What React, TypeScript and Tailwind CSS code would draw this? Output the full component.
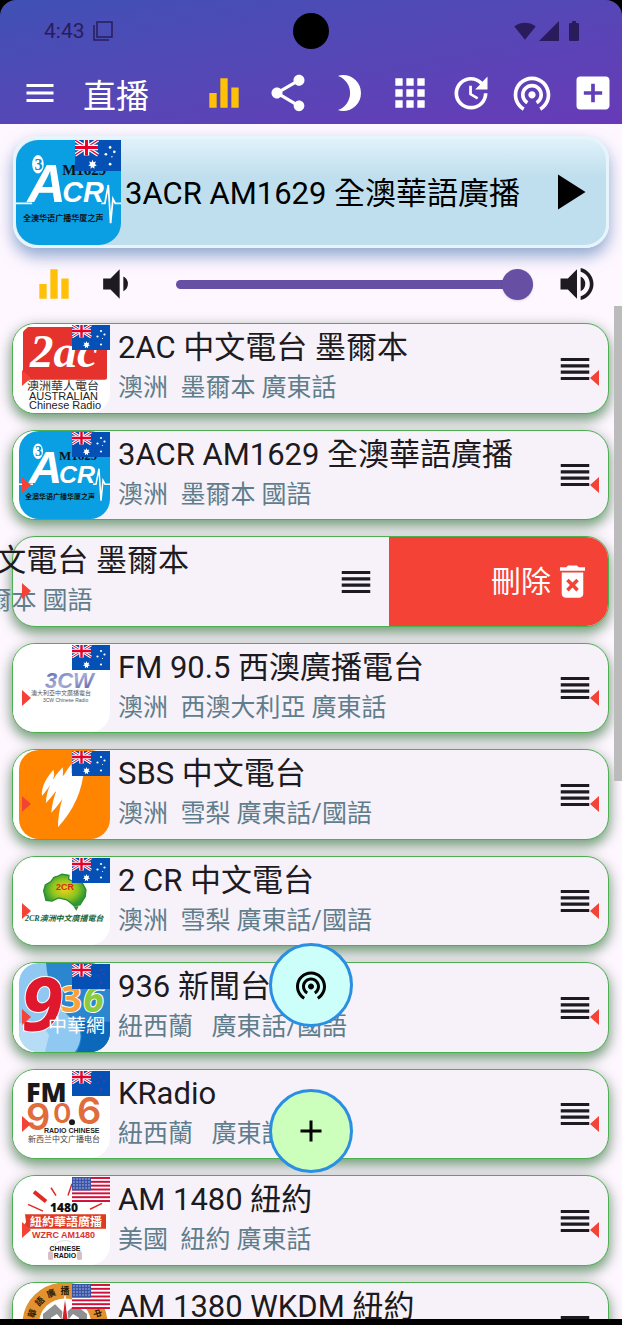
import React from 'react';
import {
  MdAdd,
  MdAddBox,
  MdApps,
  MdBatteryFull,
  MdDeleteForever,
  MdEqualizer,
  MdMenu,
  MdPlayArrow,
  MdReorder,
  MdShare,
  MdSignalCellular4Bar,
  MdSignalWifi4Bar,
  MdUpdate,
  MdVolumeDown,
  MdVolumeUp,
  MdWifiTethering,
} from 'react-icons/md';

type Country = 'au' | 'nz' | 'us';

type Station = {
  name: string;
  detail: string;
  country: Country;
  logo: React.ReactNode;
  swiped?: boolean;
};

const cjk = "font-['Noto_Sans_CJK_TC',sans-serif]";
const arial = "font-['Liberation_Sans',sans-serif]";
const times = "font-['Liberation_Serif',serif]";

const UnionJack = () => (
  <g>
    <path d="M0 0 19 12M19 0 0 12" stroke="#fff" strokeWidth="3" />
    <path d="M0 0 19 12M19 0 0 12" stroke="#e4002b" strokeWidth="1" />
    <path d="M9.500 0V12.500M0 6H19" stroke="#fff" strokeWidth="4.500" />
    <path d="M9.500 0V12.500M0 6H19" stroke="#e4002b" strokeWidth="2.400" />
  </g>
);

const Flag = ({ country, className }: { country: Country; className: string }) => (
  <svg viewBox="0 0 38 25" preserveAspectRatio="none" className={className} aria-hidden="true">
    {country === 'us' ? (
      <g>
        <rect width="38" height="25" fill="#fff" />
        {[0, 1, 2, 3, 4, 5, 6].map((n) => (
          <rect key={n} y={n * 3.84} width="38" height="1.95" fill="#d0103a" />
        ))}
        <rect width="19" height="13.500" fill="#3a55a8" />
        {[2, 5, 8, 11].map((y) =>
          [2, 5, 8, 11, 14, 17].map((x) => <circle key={`${x}-${y}`} cx={x} cy={y} r="0.7" fill="#cdd6f0" />)
        )}
      </g>
    ) : (
      <g>
        <rect width="38" height="25" fill="#0450b4" />
        <UnionJack />
        {country === 'au' ? (
          <g fill="#fff">
            <path d="m14.500 16 .8 2 2.100-.6-1 1.900 1.600 1.300-2 .5.1 2.100-1.600-1.300-1.600 1.300.1-2.100-2-.5 1.600-1.300-1-1.900 2.100.6z" />
            <circle cx="29" cy="6" r="1.100" />
            <circle cx="25.500" cy="11.500" r="1.100" />
            <circle cx="32.500" cy="9.500" r="1.100" />
            <circle cx="30.500" cy="13.500" r="0.6" />
            <circle cx="29" cy="19.500" r="1.100" />
          </g>
        ) : (
          <g fill="#5b3a98">
            <circle cx="29" cy="6" r="1" />
            <circle cx="26" cy="11.500" r="1" />
            <circle cx="32" cy="10" r="1" />
            <circle cx="29" cy="18.500" r="1.200" />
          </g>
        )}
      </g>
    )}
  </svg>
);

const Logo2ac = () => (
  <>
    <rect width="91" height="91" fill="#fff" />
    <rect x="4" y="3" width="84" height="54" rx="2" fill="#e5322d" />
    <text x="11" y="44" fontSize="47" fill="#fff" className={`${times} font-bold italic`}>2ac</text>
    <text x="8" y="67" fontSize="12" fill="#333" className={cjk}>澳洲華人電台</text>
    <text x="10" y="78" fontSize="11" fill="#222" className={arial}>AUSTRALIAN</text>
    <text x="10" y="87" fontSize="11" fill="#222" className={arial}>Chinese Radio</text>
  </>
);

const Logo3acr = () => (
  <>
    <rect width="91" height="91" fill="#0a9fe3" />
    <ellipse cx="19" cy="21" rx="5" ry="8" fill="#fff" />
    <text x="16" y="26" fontSize="14" fill="#0a8fd0" className={`${times} font-bold`}>3</text>
    <text x="40" y="30" fontSize="13" fill="#111" className={`${times} font-bold`}>M1629</text>
    <text x="10" y="54" fontSize="46" fill="#fff" className={`${arial} font-bold italic`}>A</text>
    <text x="40" y="54" fontSize="25" fill="#fff" className={`${arial} font-bold italic`}>CR</text>
    <path d="M0 55H14M74 55H77L80 39 82 72 84 51 86 55H91" fill="none" stroke="#fff" strokeWidth="1.500" />
    <text x="6" y="70" fontSize="7" fill="#111" className="font-['Noto_Sans_CJK_SC',sans-serif] font-bold">全澳华语广播华厦之声</text>
  </>
);

const Logo3cw = () => (
  <>
    <defs>
      <linearGradient id="cw" x1="0" y1="0" x2="1" y2="1">
        <stop offset="0" stopColor="#4858a8" />
        <stop offset="0.5" stopColor="#a9b1da" />
        <stop offset="1" stopColor="#4b4f9a" />
      </linearGradient>
    </defs>
    <rect width="91" height="91" fill="#fff" />
    <text x="26" y="45" fontSize="22" fill="url(#cw)" className={`${arial} font-bold italic`}>3CW</text>
    <text x="12" y="53" fontSize="6" fill="#555" className={cjk}>澳大利亞中文廣播電台</text>
    <text x="24" y="60" fontSize="5" fill="#555" className={arial}>3CW Chinese Radio</text>
  </>
);

const LogoSbs = () => (
  <>
    <rect width="91" height="91" fill="#ff8400" />
    <g transform="scale(.333) translate(-57 -33)" fill="#fff">
      <path d="M126 174Q122 140 160 94Q172 120 126 174Z" />
      <path d="M138 196Q138 140 188 86Q198 130 138 196Z" />
      <path d="M154 226Q160 150 214 76Q224 150 154 226Z" />
      <path d="M174 270Q174 190 226 78L252 90Q246 190 174 270Z" />
      <path d="M140 128 200 108 210 170 160 160Z" />
    </g>
  </>
);

const Logo2cr = () => (
  <>
    <defs>
      <radialGradient id="oz">
        <stop offset="0" stopColor="#f2d21c" />
        <stop offset="0.6" stopColor="#8cc420" />
        <stop offset="1" stopColor="#2f9a34" />
      </radialGradient>
    </defs>
    <rect width="91" height="91" fill="#fff" />
    <g transform="scale(.333) translate(-57 -351)" fill="url(#oz)" stroke="#2c8a2f" strokeWidth="4">
      <path d="M131 456 136 438 152 428 162 414 174 410 186 404 207 408 206 420 222 428 232 424 238 400 246 430 258 452 256 474 240 500 222 502 208 490 200 484 176 478 156 488 138 486Z" />
      <path d="M224 506h9l-4 8z" />
    </g>
    <text x="37" y="34" fontSize="9" fill="#d22a12" className={`${arial} font-bold`}>2CR</text>
    <text x="6" y="66" fontSize="8" fill="#14623a" className="font-['Liberation_Serif','Noto_Sans_CJK_TC',serif] font-bold italic">2CR澳洲中文廣播電台</text>
  </>
);

const Logo936 = () => (
  <>
    <rect width="91" height="91" fill="#8fc8f0" />
    <path d="M27 0H91V91H56Q66 76 58 62Q30 40 27 0Z" fill="#2a86cf" />
    <path d="M0 62Q20 54 30 74L26 91H0Z" fill="#b6dcf6" />
    <path d="M60 60H91V91H58Q66 76 60 60Z" fill="#0c68ba" />
    <text x="2" y="70" fontSize="76" fill="#e0182d" stroke="#fff" strokeWidth="2" paintOrder="stroke" className="font-['Open_Sans',sans-serif] font-bold italic">9</text>
    <text x="42" y="50" fontSize="36" fill="#f9a13a" stroke="#fff" strokeWidth="2" paintOrder="stroke" className="font-['Open_Sans',sans-serif] font-bold">3</text>
    <text x="64" y="50" fontSize="38" fill="#8ccc3c" stroke="#fff" strokeWidth="2" paintOrder="stroke" className="font-['Open_Sans',sans-serif] font-bold italic">6</text>
    <text x="29" y="71" fontSize="19" fill="#fff" className={cjk}>中華網</text>
  </>
);

const Logo906 = () => (
  <>
    <rect width="91" height="91" fill="#fff" />
    <text x="7" y="33" fontSize="27" fill="#1a1a1a" className="font-['Open_Sans',sans-serif] font-extrabold">FM</text>
    <g fill="#e06c3c" className="font-['Inter',sans-serif] font-semibold">
      <text x="7" y="62" fontSize="38">9</text>
      <text x="34" y="55" fontSize="28">0</text>
      <text x="58" y="56" fontSize="38">6</text>
    </g>
    <circle cx="53" cy="54" r="3" fill="#1a1a1a" />
    <text x="25" y="65" fontSize="7" fill="#222" className={`${arial} font-bold`}>RADIO CHINESE</text>
    <text x="9" y="74" fontSize="8" fill="#444" className="font-['Noto_Sans_CJK_SC',sans-serif]">新西兰中文广播电台</text>
  </>
);

const Logo1480 = () => (
  <>
    <rect width="91" height="91" fill="#fff" />
    <g stroke="#e12a20" strokeWidth="1.500">
      <path d="M15 16 27 26" strokeWidth="4" />
      <path d="M32 12 37 20M53 8 49 20M9 29 24 36M71 34 83 28" />
    </g>
    <text x="31" y="37" fontSize="12" fill="#111" className="font-['Open_Sans',sans-serif] font-extrabold">1480</text>
    <path d="M6 39H87V54H3L7 47Z" fill="#e03a22" />
    <text x="11" y="51" fontSize="12" fill="#fff" className={`${cjk} font-bold`}>紐約華語廣播</text>
    <text x="13" y="63" fontSize="9" fill="#dc3232" className={`${arial} font-bold`}>WZRC AM1480</text>
    <path d="M33 75Q36 66 46 66T59 75" fill="none" stroke="#ddd" />
    <rect x="29" y="77" width="5" height="9" rx="2" fill="#d9bfc4" />
    <rect x="58" y="77" width="5" height="9" rx="2" fill="#d9bfc4" />
    <text x="46" y="77" fontSize="7" fill="#111" textAnchor="middle" className={`${arial} font-bold`}>CHINESE</text>
    <text x="46" y="84" fontSize="7" fill="#111" textAnchor="middle" className={`${arial} font-bold`}>RADIO</text>
  </>
);

const Logo1380 = () => (
  <>
    <rect width="91" height="91" fill="#fff" />
    <circle cx="46" cy="42" r="34" fill="none" stroke="#e2922f" strokeWidth="17" />
    <circle cx="46" cy="42" r="26" fill="#fff" />
    <path d="M24 46V32L36 22 46 32 56 22 68 32V46H60V36L54 32 46 42 38 32 32 36V46Z" fill="#8f9092" />
    <path d="M46 13 50 46H42Z" fill="#d5202b" stroke="#fff" />
    <g fontSize="9" fill="#2a1a08" textAnchor="middle" className={`${cjk} font-bold`}>
      {['華', '語', '廣', '播', '電', '台', '中'].map((char, index) => (
        <text key={char} x="46" y="11" transform={`rotate(${index * 24 - 72} 46 42)`}>{char}</text>
      ))}
    </g>
  </>
);

const stations: Station[] = [
  { name: '2AC 中文電台 墨爾本', detail: '澳洲  墨爾本 廣東話', country: 'au', logo: <Logo2ac /> },
  { name: '3ACR AM1629 全澳華語廣播', detail: '澳洲  墨爾本 國語', country: 'au', logo: <Logo3acr /> },
  { name: '2AC 中文電台 墨爾本', detail: '澳洲  墨爾本 國語', country: 'au', logo: <Logo2ac />, swiped: true },
  { name: 'FM 90.5 西澳廣播電台', detail: '澳洲  西澳大利亞 廣東話', country: 'au', logo: <Logo3cw /> },
  { name: 'SBS 中文電台', detail: '澳洲  雪梨 廣東話/國語', country: 'au', logo: <LogoSbs /> },
  { name: '2 CR 中文電台', detail: '澳洲  雪梨 廣東話/國語', country: 'au', logo: <Logo2cr /> },
  { name: '936 新聞台', detail: '紐西蘭   廣東話/國語', country: 'nz', logo: <Logo936 /> },
  { name: 'KRadio', detail: '紐西蘭   廣東話', country: 'nz', logo: <Logo906 /> },
  { name: 'AM 1480 紐約', detail: '美國  紐約 廣東話', country: 'us', logo: <Logo1480 /> },
  { name: 'AM 1380 WKDM 紐約', detail: '美國  紐約 國語', country: 'us', logo: <Logo1380 /> },
];

const StatusBar = () => (
  <div className="relative flex h-[62px] items-center justify-between pl-11 pr-9 text-[#2a1c5c]">
    <div className="flex items-center gap-2">
      <span className="text-[21px] leading-6">4:43</span>
      <svg width="20" height="20" viewBox="0 0 20 20" fill="none" stroke="currentColor" strokeWidth="1.500" aria-hidden="true">
        <path d="M4 1H19V16H4ZM1 4V19H16" />
      </svg>
    </div>
    <div className="flex items-center gap-px">
      <MdSignalWifi4Bar size={22} />
      <MdSignalCellular4Bar size={24} />
      <MdBatteryFull size={24} />
    </div>
    <div className="absolute left-1/2 top-1/2 size-9 -translate-x-1/2 -translate-y-1/2 rounded-full bg-black" />
  </div>
);

const Toolbar = () => (
  <div className="flex h-[62px] items-center pl-[22px] pr-[7px] text-white">
    <button aria-label="選單"><MdMenu size={36} /></button>
    <h1 className="ml-[25px] flex-1 pt-2 text-[33px] leading-10">直播</h1>
    <div className="flex items-center gap-[17px]">
      <button aria-label="均衡器" className="mr-[3px] text-[#ffc107]"><MdEqualizer size={44} /></button>
      <button aria-label="分享"><MdShare size={44} /></button>
      <button aria-label="夜間模式">
        <svg width="44" height="44" viewBox="0 0 44 44" fill="currentColor" aria-hidden="true">
          <path d="M11 5Q13 4 16 4A18 18 0 0 1 16 40Q13 40 11 39A18 18 0 0 0 11 5Z" />
        </svg>
      </button>
      <button aria-label="分類"><MdApps size={44} /></button>
      <button aria-label="定時"><MdUpdate size={44} /></button>
      <button aria-label="廣播"><MdWifiTethering size={44} /></button>
      <button aria-label="新增"><MdAddBox size={44} /></button>
    </div>
  </div>
);

const NowPlaying = () => (
  <section className="mx-[13px] mt-3 flex h-28 items-center rounded-[24px] border-[3px] border-[#e6f5fc] bg-linear-to-b from-[#e0f2fa] to-[#c0dfee] to-35% shadow-[0_8px_16px_rgba(70,115,175,0.6)]">
    <div className="relative size-[105px] shrink-0">
      <svg viewBox="0 0 91 91" className="size-full rounded-[22px]" aria-hidden="true"><Logo3acr /></svg>
      <Flag country="au" className="absolute right-0 top-0 h-[31px] w-[46px]" />
    </div>
    <h2 className="ml-1 flex-1 whitespace-nowrap pt-1 text-[31px] leading-10 text-black">3ACR AM1629 全澳華語廣播</h2>
    <button aria-label="播放" className="mr-2 text-black"><MdPlayArrow size={60} /></button>
  </section>
);

const VolumeBar = () => (
  <div className="mt-[14px] flex items-center pl-8 pr-[23px] text-[#1d1b20]">
    <button aria-label="均衡器" className="mr-[18px] text-[#ffc107]"><MdEqualizer size={44} /></button>
    <button aria-label="降低音量"><MdVolumeDown size={44} /></button>
    <input
      type="range"
      aria-label="音量"
      defaultValue={100}
      className="ml-[38px] mr-[22px] h-[9px] min-w-0 flex-1 appearance-none rounded-full bg-[#6750a4] [&::-webkit-slider-thumb]:size-[31px] [&::-webkit-slider-thumb]:appearance-none [&::-webkit-slider-thumb]:rounded-full [&::-webkit-slider-thumb]:bg-[#6750a4] [&::-webkit-slider-thumb]:shadow-sm"
    />
    <button aria-label="提高音量"><MdVolumeUp size={44} /></button>
  </div>
);

const StationCard = ({ station }: { station: Station }) => (
  <li className="relative flex justify-end rounded-[23px] border border-[#4caf50] bg-[#f7f2fa] shadow-[0_6px_12px_rgba(50,130,60,0.55),0_4px_16px_rgba(0,0,0,0.22)]">
    <div className="flex w-full shrink-0 items-stretch">
      <div className="relative w-[97px] shrink-0 rounded-[22px] bg-white pl-[6px]">
        <svg viewBox="0 0 91 91" preserveAspectRatio="none" className="size-full rounded-[20px]" aria-hidden="true">
          {station.logo}
        </svg>
        <Flag country={station.country} className="absolute right-0 top-px h-[25px] w-[38px]" />
      </div>
      <div className="ml-2 min-w-0 flex-1 whitespace-pre pt-1">
        <h3 className="text-[31px] leading-10 text-[#1d1b20]">{station.name}</h3>
        <p className="text-[25px] leading-10 text-[#607d8b]">{station.detail}</p>
      </div>
      <button aria-label="拖曳排序" className="mr-3.5 text-[#1d1b20]"><MdReorder size={38} /></button>
    </div>
    {station.swiped && (
      <button className="flex w-[219px] shrink-0 items-center justify-end rounded-r-[22px] bg-[#f44336] pr-3.5 text-[30px] leading-10 text-white">
        刪除<MdDeleteForever size={43} />
      </button>
    )}
    <svg viewBox="0 0 9 16" className="absolute left-[9px] top-[46px] h-4 w-[9px]" fill="#f44336" aria-hidden="true">
      <path d="M0 0 9 8 0 16Z" />
    </svg>
    {!station.swiped && (
      <svg viewBox="0 0 9 16" className="absolute right-[9px] top-[46px] h-4 w-[9px]" fill="#f44336" aria-hidden="true">
        <path d="M9 0 0 8 9 16Z" />
      </svg>
    )}
  </li>
);

const App = () => {
  return (
    <div className="relative flex h-screen flex-col overflow-hidden border-b-[6px] border-black bg-black font-['Roboto','Noto_Sans_CJK_TC',sans-serif]">
      <header className="rounded-t-[16px] bg-linear-to-br from-[#3f51b5] to-[#673ab7]">
        <StatusBar />
        <Toolbar />
      </header>

      <main className="flex min-h-0 flex-1 flex-col bg-[#fef7ff]">
        <NowPlaying />
        <VolumeBar />
        <div className="relative min-h-0 flex-1 overflow-hidden">
          <ul className="grid grid-cols-1 grid-rows-[repeat(5,91px_90px)] gap-4 pl-3 pr-[13px] pt-[17px]">
            {stations.map((station, index) => (
              <StationCard key={index} station={station} />
            ))}
          </ul>
          <div className="absolute right-0 top-0 h-[475px] w-2 bg-[#bbbbbb]" />
        </div>
      </main>

      <div className="absolute bottom-[146px] left-1/2 flex -translate-x-1/2 flex-col gap-[62px] text-black">
        <button aria-label="串流" className="flex size-[84px] items-center justify-center rounded-full border-[3px] border-[#2a8fe3] bg-[#ccfffa]">
          <MdWifiTethering size={36} />
        </button>
        <button aria-label="新增電台" className="flex size-[84px] items-center justify-center rounded-full border-[3px] border-[#2a8fe3] bg-[#ccffbb]">
          <MdAdd size={36} />
        </button>
      </div>
    </div>
  );
};

export default App;
